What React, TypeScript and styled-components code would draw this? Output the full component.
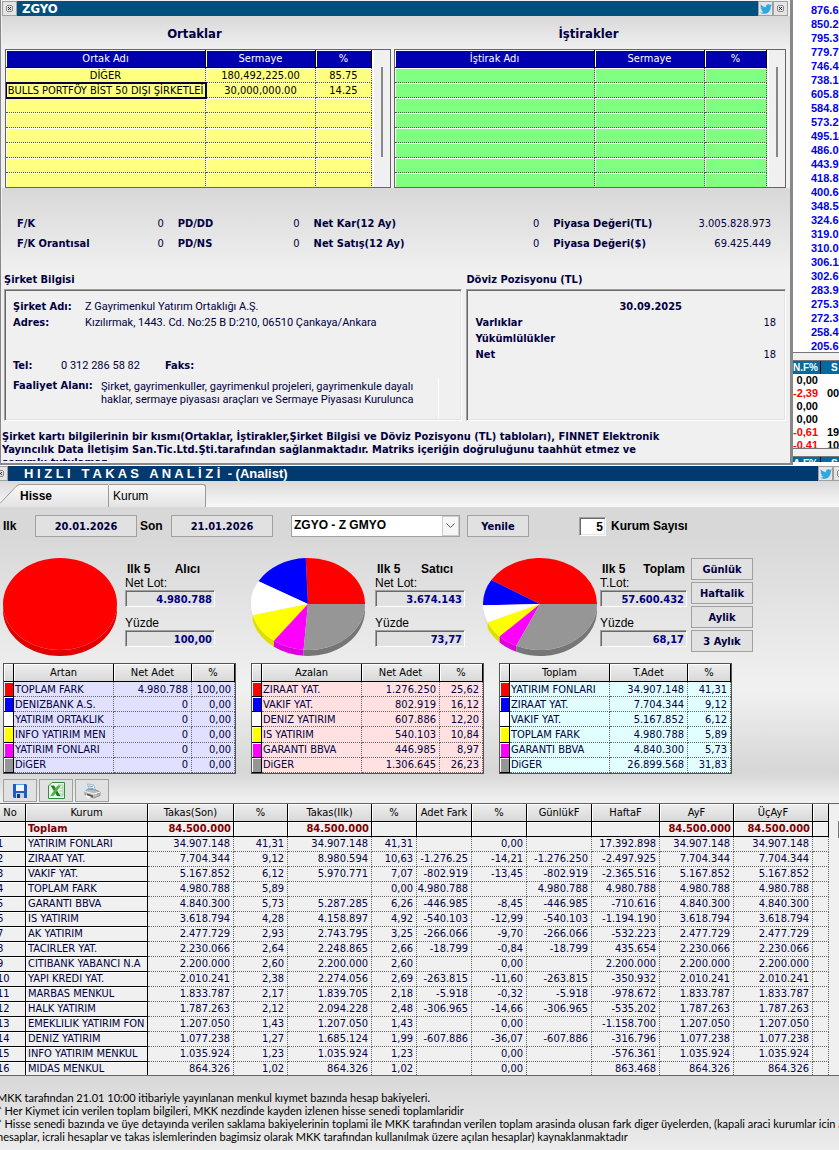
import React from "react";
import styled, { createGlobalStyle } from "styled-components";
import { FaTwitter } from "react-icons/fa";

const ui = `"DejaVu Sans Condensed", "DejaVu Sans", sans-serif`;
const sys = `"Liberation Sans", Arial, sans-serif`;
const prose = `Roboto, "Liberation Sans", sans-serif`;
const note = `Lato, "Liberation Sans", sans-serif`;
const navy = "#000040";

const GlobalStyle = createGlobalStyle`
  *, *::before, *::after { box-sizing: border-box; }
  body { margin: 0; background: #ececec; font: 11px/15px ${ui}; color: ${navy}; overflow-x: hidden; }
  button, input, select { font: inherit; color: inherit; margin: 0; border-radius: 0; }
  h1, h2, p, dl, dd, dt { margin: 0; font-size: inherit; }
  table { border-spacing: 0; table-layout: fixed; width: 100%; }
`;

const Page = styled.div`
  overflow: hidden;
`;

const TopArea = styled.div`
  display: flex;
`;

const CompanyWindow = styled.section`
  flex: 1;
  min-width: 0;
  height: 465px;
  display: flex;
  flex-direction: column;
  padding: 1px 0 1px 1px;
  background: #f0f0f0;
  border: solid #888;
  border-width: 0 3px 2px 1px;
  overflow: hidden;
`;

const TitleBar = styled.header<{ $bg: string; $left: number; $right: number }>`
  display: flex;
  align-items: center;
  height: 15px;
  flex: none;
  background: ${(p) => p.$bg};
  color: #fff;
  margin-left: ${(p) => p.$left}px;
  margin-right: ${(p) => p.$right}px;
`;

const WindowName = styled.h1<{ $wide?: boolean }>`
  flex: 1;
  font: bold 13px/15px ${(p) => (p.$wide ? sys : ui)};
  padding-left: ${(p) => (p.$wide ? 16 : 5)}px;
  white-space: pre;
`;

const TitleButton = styled.button`
  display: flex;
  align-items: center;
  justify-content: center;
  width: 15px;
  height: 15px;
  padding: 0;
  border: 1px solid #a0a0a0;
  background: #e4e4e4;
  color: #2fa8e0;
`;

const Headings = styled.div`
  display: grid;
  grid-template-columns: 382fr 400fr;
  height: 33px;
  flex: none;
  background: linear-gradient(#d8d8d8, #f0f0f0);
  h2 { font: bold 13px/35px ${ui}; text-align: center; }
`;

const Grids = styled.div`
  display: grid;
  grid-template-columns: 386fr 392fr;
  gap: 3px;
  padding: 0 4px 0 3px;
  flex: none;
`;

const GridFrame = styled.div`
  display: flex;
  height: 139px;
  border: 1px solid #666;
  overflow: hidden;
`;

const HolderTable = styled.table<{ $fill: string }>`
  flex: 1;
  width: auto;
  align-self: flex-start;
  color: #000;
  text-align: center;
  th {
    height: 18px;
    padding: 0;
    font-weight: normal;
    line-height: 15px;
    color: #fff;
    background: #0000b0;
    border-right: 1px solid #000;
    border-bottom: 1px solid #000;
    box-shadow: inset 1px 1px #fff;
  }
  td {
    height: 15px;
    padding: 2px 0 0;
    line-height: 12px;
    white-space: nowrap;
    background: ${(p) => p.$fill};
    border-right: 1px dotted #555;
    border-bottom: 1px dotted #555;
    box-shadow: inset 1px 1px #fff;
  }
`;

const SelectedCell = styled.td`
  && {
    outline: 2px solid #00003c;
    outline-offset: -1px;
  }
`;

const ScrollTrack = styled.div`
  width: 18px;
  padding: 17px 7px 0 0;
  background: #f0f0f0;
  border-left: 2px solid #fff;
  display: flex;
  justify-content: flex-end;
`;

const ScrollThumb = styled.div`
  width: 2px;
  height: 90px;
  background: #888;
`;

const Ratios = styled.div`
  display: grid;
  grid-template-columns: 147fr 122fr 226fr 218fr;
  gap: 0 14px;
  padding: 26px 19px 17px 15px;
  flex: none;
  background: linear-gradient(#d8d8d8, #f0f0f0);
`;

const Ratio = styled.dl`
  display: flex;
  justify-content: space-between;
  line-height: 20px;
  white-space: nowrap;
  dt { font-weight: bold; }
`;

const Details = styled.div`
  display: grid;
  grid-template-columns: 459fr 320fr;
  gap: 0 4px;
  padding: 0 4px 0 2px;
  flex: none;
  h2 { font: bold 11px/18px ${ui}; height: 18px; }
`;

const Sunken = styled.div`
  height: 132px;
  padding: 9px 9px 9px 8px;
  border: 1px solid;
  border-color: #a0a0a0 #fff #fff #a0a0a0;
  box-shadow: inset 1px 1px #696969, inset -1px -1px #e3e3e3;
`;

const Line = styled.div<{ $h?: number }>`
  display: flex;
  min-height: ${(p) => p.$h ?? 16}px;
  font-family: ${prose};
  line-height: 16px;
  white-space: nowrap;
`;

const Term = styled.b<{ $w: number }>`
  width: ${(p) => p.$w}px;
  flex: none;
  font-family: ${ui};
`;

const Phone = styled.span`
  width: 104px;
  flex: none;
`;

const Activity = styled.p`
  flex: 1;
  max-width: 338px;
  line-height: 13px;
  padding-top: 2px;
  height: 40px;
  border-right: 1px solid #fff;
  white-space: pre-line;
`;

const PositionDate = styled.p`
  font-weight: bold;
  line-height: 16px;
  padding-left: 50px;
  text-align: center;
`;

const Position = styled.div`
  display: flex;
  justify-content: space-between;
  line-height: 16px;
`;

const Disclaimer = styled.p`
  font-weight: bold;
  line-height: 13px;
  margin-top: 9px;
  height: 31px;
  overflow: hidden;
  white-space: pre;
`;

const Quotes = styled.aside`
  width: 46px;
  height: 465px;
  overflow: hidden;
  background: #fff;
  font: bold 11px/14px ${sys};
  color: #0000f0;
`;

const QuoteList = styled.div`
  height: 352px;
  padding: 3px 0 0 18px;
`;

const Divider = styled.div`
  height: 9px;
  border: solid #777;
  border-width: 1px 0;
  background: #f0f0f0;
`;

const FlowTable = styled.table`
  color: #000;
  line-height: 13px;
  th {
    height: 13px;
    padding: 0 2px 0 0;
    color: #fff;
    background: #006b9f;
    border-right: 1px solid #000;
    font-size: 10px;
    line-height: 12px;
    text-align: right;
  }
  td { height: 13px; padding: 0 3px 0 0; text-align: right; }
  td:last-child, th:last-child { padding: 0 0 0 6px; text-align: left; white-space: nowrap; border-right: 0; }
  th:last-child { padding-left: 10px; }
`;

const FlowClip = styled.div<{ $h: number }>`
  height: ${(p) => p.$h}px;
  overflow: hidden;
`;

const Change = styled.td<{ $down: boolean }>`
  color: ${(p) => (p.$down ? "#f00" : "#000")};
`;

const AnalysisWindow = styled.section`
  border-top: 1px solid #fff;
`;

const Tabs = styled.div`
  display: flex;
  align-items: flex-end;
  height: 26px;
  background: linear-gradient(#dadada, #f8f8f8);
`;

const Tab = styled.button<{ $active?: boolean }>`
  display: flex;
  align-items: center;
  height: 23px;
  width: ${(p) => (p.$active ? 109 : 97)}px;
  padding: 0 0 0 ${(p) => (p.$active ? 0 : 4)}px;
  border: solid #999;
  border-width: ${(p) => (p.$active ? "0 1px 0 0" : "1px 1px 0 0")};
  border-radius: 0 3px 0 0;
  background: ${(p) => (p.$active ? "none" : "linear-gradient(#f8f8f8, #e4e4e4)")};
  color: #000;
  font: ${(p) => (p.$active ? "bold" : "normal")} 12px/22px ${sys};
  svg { display: block; flex: none; }
  span { flex: 1; height: 23px; border-top: 1px solid #999; background: linear-gradient(#f8f8f8, #e4e4e4); text-align: left; line-height: 23px; }
`;

const Body = styled.div`
  background: linear-gradient(#d8d8d8 0, #d8d8d8 30px, #f0f0f0 175px, #f0f0f0 185px, #d6d6d6 265px, #f0f0f0 294px, #f0f0f0 100%);
`;

const Controls = styled.form`
  display: flex;
  align-items: center;
  height: 38px;
  padding-left: 3px;
  font: bold 12px/15px ${sys};
  color: #000;
`;

const Button = styled.button`
  height: 22px;
  width: 62px;
  padding: 0;
  border: 1px solid #a0a0a0;
  background: #e1e1e1;
  color: ${navy};
  font: bold 11px/15px ${ui};
`;

const DateButton = styled(Button)`
  width: 102px;
`;

const ControlLabel = styled.label<{ $w?: number; $left?: number }>`
  width: ${(p) => (p.$w ? p.$w + "px" : "auto")};
  padding-left: ${(p) => p.$left ?? 0}px;
`;

const Combo = styled.div`
  position: relative;
  width: 169px;
  margin: 0 7px 0 18px;
  select {
    appearance: none;
    display: block;
    width: 100%;
    height: 22px;
    padding: 0 0 2px 2px;
    border: 1px solid #a0a0a0;
    background: #fff;
    color: #000;
    font-weight: bold;
  }
`;

const ComboArrow = styled.span`
  position: absolute;
  top: 1px;
  right: 1px;
  width: 17px;
  height: 20px;
  display: flex;
  align-items: center;
  justify-content: center;
  border: 1px solid #ccc;
  background: #f6f6f6;
  pointer-events: none;
`;

const CountInput = styled.input`
  width: 27px;
  height: 19px;
  margin-left: 50px;
  padding: 1px 2px 0 0;
  border: 1px solid;
  border-color: #a0a0a0 #fff #fff #a0a0a0;
  box-shadow: inset 1px 1px #696969, inset -1px -1px #e3e3e3;
  background: #fff;
  color: #000;
  text-align: right;
`;

const Charts = styled.div`
  display: flex;
  padding: 13px 0 0 3px;
  height: 118px;
`;

const ChartGroup = styled.div<{ $w: number; $gap: number }>`
  display: flex;
  justify-content: space-between;
  width: ${(p) => p.$w}px;
  margin-right: ${(p) => p.$gap}px;
  > svg { display: block; flex: none; }
`;

const Summary = styled.div<{ $w: number }>`
  width: ${(p) => p.$w}px;
  padding-top: 4px;
  color: #000;
  font: 12px/14px ${sys};
`;

const SummaryHead = styled.div<{ $end: number }>`
  display: flex;
  justify-content: space-between;
  font-weight: bold;
  padding: 0 ${(p) => p.$end}px 0 2px;
`;

const Field = styled.label`
  display: block;
  height: 40px;
  input {
    display: block;
    width: 100%;
    height: 17px;
    padding: 1px 2px 0 0;
    border: 1px solid;
    border-color: #a0a0a0 #fff #fff #a0a0a0;
    box-shadow: inset 1px 1px #696969, inset -1px -1px #e3e3e3;
    background: #e1e1e1;
    color: #000080;
    font: bold 11px/13px ${ui};
    text-align: right;
  }
`;

const Periods = styled.div`
  display: flex;
  flex-direction: column;
  gap: 2px;
`;

const MiniGrids = styled.div`
  display: flex;
  gap: 15px;
  padding-left: 3px;
`;

const MiniTable = styled.table<{ $fill: string }>`
  width: 233px;
  height: 111px;
  border: 1px solid #555;
  background: #fff;
  color: ${navy};
  th {
    height: 18px;
    padding: 0;
    font-weight: normal;
    line-height: 15px;
    color: #000;
    background: linear-gradient(#eee, #d8d8d8);
    border-right: 1px solid #000;
    border-bottom: 1px solid #000;
    box-shadow: inset 1px 1px #fff;
  }
  td {
    height: 15px;
    padding: 0 3px 0 1px;
    line-height: 13px;
    white-space: nowrap;
    overflow: hidden;
    text-align: right;
    background: ${(p) => p.$fill};
    border-right: 1px dotted #666;
    border-bottom: 1px dotted #666;
  }
  td:nth-child(2) { text-align: left; padding-right: 0; }
`;

const Swatch = styled.td<{ $c: string }>`
  && {
    background: ${(p) => p.$c};
    border-right: 1px solid #000;
    border-bottom: 1px solid #000;
    box-shadow: inset 1px 1px #fff;
  }
`;

const Actions = styled.div`
  display: flex;
  gap: 2px;
  padding: 5px 0 1px 3px;
`;

const IconButton = styled.button`
  display: flex;
  align-items: center;
  justify-content: center;
  width: 34px;
  height: 23px;
  padding: 0;
  border: 1px solid #a0a0a0;
  background: #e1e1e1;
`;

const ResultFrame = styled.div`
  display: flex;
  height: 273px;
  margin-left: -5px;
  border: solid #666;
  border-width: 1px 0;
  background: #f0f0f0;
  overflow: hidden;
`;

const ResultTable = styled.table`
  flex: 1;
  width: auto;
  align-self: flex-start;
  th {
    height: 18px;
    padding: 0;
    font-weight: normal;
    line-height: 15px;
    color: #000;
    background: linear-gradient(#eee, #d8d8d8);
    border-right: 1px solid #000;
    border-bottom: 1px solid #000;
    box-shadow: inset 1px 1px #fff;
    white-space: nowrap;
  }
  td {
    height: 15px;
    padding: 0 3px 0 0;
    line-height: 14px;
    text-align: right;
    white-space: nowrap;
    overflow: hidden;
    border-right: 1px dotted #666;
    border-bottom: 1px dotted #666;
  }
  td:nth-child(1), td:nth-child(2) {
    text-align: left;
    padding: 0 0 0 2px;
    border-right: 1px solid #000;
    border-bottom: 1px solid #000;
    box-shadow: inset 1px 1px #fff;
  }
`;

const TotalRow = styled.tr`
  color: #800000;
  font-weight: bold;
  && td { border-right: 1px solid #000; border-bottom: 1px solid #000; box-shadow: inset 1px 1px #fff; padding-right: 2px; }
`;

const ResultScroll = styled.div`
  width: 10px;
  display: flex;
  justify-content: flex-end;
  padding-top: 17px;
`;

const ResultThumb = styled.div`
  width: 1px;
  height: 17px;
  background: #777;
`;

const Notes = styled.footer`
  padding: 15px 0 7px;
  margin-left: -3px;
  background: linear-gradient(#d8d8d8, #ececec);
  color: #000;
  font: 11px/13px ${note};
  white-space: nowrap;
`;

const CloseGlyph = () => (
  <svg width="7" height="7" viewBox="0 0 7 7" aria-hidden="true" shapeRendering="crispEdges">
    <path d="M1 0.5h5M1 6.5h5M0.5 1v5M6.5 1v5" stroke="#888" fill="none" />
    <path d="M2 2l3 3M5 2l-3 3" stroke="#222" strokeWidth="1.3" fill="none" />
  </svg>
);

const colors = ["#ff0000", "#0000ff", "#ffffff", "#ffff00", "#ff00ff", "#969696"];
const sides = ["#df0000", "#0000d8", "#e0e0e0", "#dede00", "#de00de", "#767676"];

function Pie({ shares, label }: { shares: number[]; label: string }) {
  const cx = 57, cy = 46, rx = 57, ry = 46, depth = 6;
  const total = shares.reduce((a, b) => a + b, 0);
  const pt = (a: number, dy = 0) => `${(cx + rx * Math.cos(a)).toFixed(2)} ${(cy - ry * Math.sin(a) + dy).toFixed(2)}`;
  let start = 0;
  const parts = shares.map((s, i) => {
    const a0 = start;
    const a1 = (start += (s / total) * Math.PI * 2);
    const w0 = Math.max(a0, Math.PI);
    return { i, a0, a1, w0, full: s === total };
  }).filter((p) => p.a1 > p.a0);
  return (
    <svg width="114" height="98" viewBox="0 0 114 98" role="img" aria-label={label}>
      {parts.filter((p) => p.a1 > Math.PI).map((p) => (
        <path key={p.i} fill={sides[p.i]} d={`M${pt(p.w0)}A${rx} ${ry} 0 0 0 ${pt(p.a1)}L${pt(p.a1, depth)}A${rx} ${ry} 0 0 1 ${pt(p.w0, depth)}Z`} />
      ))}
      {parts.map((p) =>
        p.full ? (
          <ellipse key={p.i} cx={cx} cy={cy} rx={rx} ry={ry} fill={colors[p.i]} />
        ) : (
          <path key={p.i} fill={colors[p.i]} d={`M${cx} ${cy}L${pt(p.a0)}A${rx} ${ry} 0 ${p.a1 - p.a0 > Math.PI ? 1 : 0} 0 ${pt(p.a1)}Z`} />
        )
      )}
    </svg>
  );
}

const SaveIcon = () => (
  <svg width="16" height="16" viewBox="0 0 16 16" aria-hidden="true">
    <path d="M1 1h13l1 1v13H2l-1-1z" fill="#1d5fc0" />
    <path d="M4 1h8v7H4z" fill="#f2f6fc" />
    <path d="M4 1h8v1H4z" fill="#4fa3ea" />
    <path d="M4 10h8v5H4z" fill="#c6d3e4" />
    <path d="M5 11h3v4H5z" fill="#173a78" />
  </svg>
);

const ExcelIcon = () => (
  <svg width="17" height="17" viewBox="0 0 17 17" aria-hidden="true">
    <path d="M4 .5h12.500v16H.5V4z" fill="#eef8ec" stroke="#2f8f3a" />
    <path d="M10 3h5v11h-5M11 6h4M11 9h4M11 12h4" stroke="#9ccf9c" fill="none" />
    <path d="M2.500 3.500h3.500l6.500 10.500H9z" fill="#1f7d2c" />
    <path d="M9.500 3.500h3.300L5.500 14H2.200z" fill="#55b143" />
  </svg>
);

const PrintIcon = () => (
  <svg width="17" height="16" viewBox="0 0 17 16" aria-hidden="true">
    <path d="M3.500 1l6 .8 2 5.700-6-1z" fill="#fbfdff" stroke="#9aa7b5" strokeWidth=".8" />
    <path d="M5 3l4 .7M5.500 5l4 .7" stroke="#5aa4dd" />
    <path d="M1 8.500l3-2.500 8 1 4 2v3.500l-6 2.500-9-3z" fill="#bdbdbd" stroke="#777" strokeWidth=".7" />
    <path d="M1 8.500l9 2.500 6-2" stroke="#f5f5f5" fill="none" />
    <path d="M3 10.500l6 2v2l-6-2z" fill="#555" />
    <path d="M2 12l5 1.700-2 1.300-4-1.500z" fill="#fff" />
    <path d="M13 11h1.500" stroke="#4caf50" />
  </svg>
);

const quotes = ["876.62", "850.20", "795.30", "779.73", "746.44", "738.17", "605.87", "584.87", "573.29", "495.14", "486.00", "443.97", "418.87", "400.64", "348.54", "324.60", "319.01", "310.00", "306.11", "302.63", "283.99", "275.30", "272.33", "258.40", "205.63"];
const flows = [["0,00", ""], ["-2,39", "00"], ["0,00", ""], ["0,00", ""], ["-0,61", "19"], ["-0,41", "10"]];

const ratioGroups = [
  [["F/K", "0"], ["F/K Orantısal", "0"]],
  [["PD/DD", "0"], ["PD/NS", "0"]],
  [["Net Kar(12 Ay)", "0"], ["Net Satış(12 Ay)", "0"]],
  [["Piyasa Değeri(TL)", "3.005.828.973"], ["Piyasa Değeri($)", "69.425.449"]],
];

const summaries = [
  { side: "Alıcı", lotLabel: "Net Lot:", lot: "4.980.788", pct: "100,00", w: 212, gap: 36, bw: 90, end: 15, shares: [100, 0, 0, 0, 0, 0] },
  { side: "Satıcı", lotLabel: "Net Lot:", lot: "3.674.143", pct: "73,77", w: 214, gap: 18, bw: 90, end: 12, shares: [25.62, 16.12, 12.2, 10.84, 8.97, 26.23] },
  { side: "Toplam", lotLabel: "T.Lot:", lot: "57.600.432", pct: "68,17", w: 204, gap: 4, bw: 87, end: 2, shares: [41.31, 9.12, 6.12, 5.89, 5.73, 31.83] },
];

const minis = [
  { head: ["Artan", "Net Adet"], fill: "#e1e1ff", rows: [["TOPLAM FARK", "4.980.788", "100,00"], ["DENIZBANK A.S.", "0", "0,00"], ["YATIRIM ORTAKLIK", "0", "0,00"], ["INFO YATIRIM MEN", "0", "0,00"], ["YATIRIM FONLARI", "0", "0,00"], ["DiGER", "0", "0,00"]] },
  { head: ["Azalan", "Net Adet"], fill: "#ffe1e1", rows: [["ZIRAAT YAT.", "1.276.250", "25,62"], ["VAKIF YAT.", "802.919", "16,12"], ["DENIZ YATIRIM", "607.886", "12,20"], ["IS YATIRIM", "540.103", "10,84"], ["GARANTI BBVA", "446.985", "8,97"], ["DiGER", "1.306.645", "26,23"]] },
  { head: ["Toplam", "T.Adet"], fill: "#e1ffff", rows: [["YATIRIM FONLARI", "34.907.148", "41,31"], ["ZIRAAT YAT.", "7.704.344", "9,12"], ["VAKIF YAT.", "5.167.852", "6,12"], ["TOPLAM FARK", "4.980.788", "5,89"], ["GARANTI BBVA", "4.840.300", "5,73"], ["DiGER", "26.899.568", "31,83"]] },
];

const resultCols = [31, 122, 86, 54, 84, 45, 55, 55, 65, 68, 74, 79, 16];
const resultHead = ["No", "Kurum", "Takas(Son)", "%", "Takas(Ilk)", "%", "Adet Fark", "%", "GünlükF", "HaftaF", "AyF", "ÜçAyF", ""];
const results = [
  ["YATIRIM FONLARI", "34.907.148", "41,31", "34.907.148", "41,31", "", "0,00", "", "17.392.898"],
  ["ZIRAAT YAT.", "7.704.344", "9,12", "8.980.594", "10,63", "-1.276.25", "-14,21", "-1.276.250", "-2.497.925"],
  ["VAKIF YAT.", "5.167.852", "6,12", "5.970.771", "7,07", "-802.919", "-13,45", "-802.919", "-2.365.516"],
  ["TOPLAM FARK", "4.980.788", "5,89", "", "0,00", "4.980.788", "", "4.980.788", "4.980.788"],
  ["GARANTI BBVA", "4.840.300", "5,73", "5.287.285", "6,26", "-446.985", "-8,45", "-446.985", "-710.616"],
  ["IS YATIRIM", "3.618.794", "4,28", "4.158.897", "4,92", "-540.103", "-12,99", "-540.103", "-1.194.190"],
  ["AK YATIRIM", "2.477.729", "2,93", "2.743.795", "3,25", "-266.066", "-9,70", "-266.066", "-532.223"],
  ["TACIRLER YAT.", "2.230.066", "2,64", "2.248.865", "2,66", "-18.799", "-0,84", "-18.799", "435.654"],
  ["CITIBANK YABANCI N.A", "2.200.000", "2,60", "2.200.000", "2,60", "", "0,00", "", "2.200.000"],
  ["YAPI KREDI YAT.", "2.010.241", "2,38", "2.274.056", "2,69", "-263.815", "-11,60", "-263.815", "-350.932"],
  ["MARBAS MENKUL", "1.833.787", "2,17", "1.839.705", "2,18", "-5.918", "-0,32", "-5.918", "-978.672"],
  ["HALK YATIRIM", "1.787.263", "2,12", "2.094.228", "2,48", "-306.965", "-14,66", "-306.965", "-535.202"],
  ["EMEKLILIK YATIRIM FON", "1.207.050", "1,43", "1.207.050", "1,43", "", "0,00", "", "-1.158.700"],
  ["DENIZ YATIRIM", "1.077.238", "1,27", "1.685.124", "1,99", "-607.886", "-36,07", "-607.886", "-316.796"],
  ["INFO YATIRIM MENKUL", "1.035.924", "1,23", "1.035.924", "1,23", "", "0,00", "", "-576.361"],
  ["MIDAS MENKUL", "864.326", "1,02", "864.326", "1,02", "", "0,00", "", "863.468"],
];

function Holders({ name, fill, last, rows }: { name: string; fill: string; last: number; rows: string[][] }) {
  const filler = Array.from({ length: 8 - rows.length }, () => ["", "", ""]);
  return (
    <GridFrame>
      <HolderTable $fill={fill}>
        <colgroup><col /><col width={110} /><col width={last} /></colgroup>
        <thead><tr><th>{name}</th><th>Sermaye</th><th>%</th></tr></thead>
        <tbody>
          {[...rows, ...filler].map((r, i) => (
            <tr key={i}>
              {i === 1 && r[0] ? <SelectedCell>{r[0]}</SelectedCell> : <td>{r[0]}</td>}
              <td>{r[1]}</td>
              <td>{r[2]}</td>
            </tr>
          ))}
        </tbody>
      </HolderTable>
      <ScrollTrack><ScrollThumb /></ScrollTrack>
    </GridFrame>
  );
}

export default function App() {
  return (
    <Page>
      <GlobalStyle />
      <TopArea>
        <CompanyWindow>
          <TitleBar $bg="#00507f" $left={0} $right={2}>
            <TitleButton aria-label="Kapat"><CloseGlyph /></TitleButton>
            <WindowName>ZGYO</WindowName>
            <TitleButton aria-label="Twitter"><FaTwitter size={12} /></TitleButton>
            <TitleButton aria-label="Pencereyi kapat"><CloseGlyph /></TitleButton>
          </TitleBar>
          <Headings><h2>Ortaklar</h2><h2>İştirakler</h2></Headings>
          <Grids>
            <Holders name="Ortak Adı" fill="#ffff80" last={56} rows={[["DİĞER", "180,492,225.00", "85.75"], ["BULLS PORTFÖY BİST 50 DIŞI ŞİRKETLEİ", "30,000,000.00", "14.25"]]} />
            <Holders name="İştirak Adı" fill="#80ff80" last={62} rows={[]} />
          </Grids>
          <Ratios>
            {ratioGroups.map((g, i) => (
              <div key={i}>
                {g.map(([k, v]) => <Ratio key={k}><dt>{k}</dt><dd>{v}</dd></Ratio>)}
              </div>
            ))}
          </Ratios>
          <Details>
            <h2>Şirket Bilgisi</h2>
            <h2>Döviz Pozisyonu (TL)</h2>
            <Sunken>
              <Line><Term $w={72}>Şirket Adı:</Term>Z Gayrimenkul Yatırım Ortaklığı A.Ş.</Line>
              <Line $h={43}><Term $w={72}>Adres:</Term>Kızılırmak, 1443. Cd. No:25 B D:210, 06510 Çankaya/Ankara</Line>
              <Line $h={20}><Term $w={48}>Tel:</Term><Phone>0 312 286 58 82</Phone><Term $w={40}>Faks:</Term></Line>
              <Line><Term $w={88}>Faaliyet Alanı:</Term><Activity>{"Şirket, gayrimenkuller, gayrimenkul projeleri, gayrimenkule dayalı\nhaklar, sermaye piyasası araçları ve Sermaye Piyasası Kurulunca"}</Activity></Line>
            </Sunken>
            <Sunken>
              <PositionDate>30.09.2025</PositionDate>
              <Position><b>Varlıklar</b><span>18</span></Position>
              <Position><b>Yükümlülükler</b></Position>
              <Position><b>Net</b><span>18</span></Position>
            </Sunken>
          </Details>
          <Disclaimer>{"Şirket kartı bilgilerinin bir kısmı(Ortaklar, İştirakler,Şirket Bilgisi ve Döviz Pozisyonu (TL) tabloları), FINNET Elektronik\nYayıncılık Data İletişim San.Tic.Ltd.Şti.tarafından sağlanmaktadır. Matriks içeriğin doğruluğunu taahhüt etmez ve\nsorumlu tutulamaz."}</Disclaimer>
        </CompanyWindow>
        <Quotes>
          <QuoteList>{quotes.map((q) => <div key={q}>{q}</div>)}</QuoteList>
          <Divider />
          <FlowClip $h={87}>
            <FlowTable>
              <colgroup><col width={28} /><col /></colgroup>
              <thead><tr><th>N.F%</th><th>S</th></tr></thead>
              <tbody>
                {flows.map(([a, b], i) => <tr key={i}><Change $down={a[0] === "-"}>{a}</Change><Change $down={false}>{b}</Change></tr>)}
              </tbody>
            </FlowTable>
          </FlowClip>
          <Divider />
          <FlowClip $h={5}>
            <FlowTable>
              <colgroup><col width={28} /><col /></colgroup>
              <thead><tr><th>A.F%</th><th>S</th></tr></thead>
            </FlowTable>
          </FlowClip>
        </Quotes>
      </TopArea>

      <AnalysisWindow>
        <TitleBar $bg="#003a6e" $left={-7} $right={-9}>
          <TitleButton aria-label="Kapat"><CloseGlyph /></TitleButton>
          <WindowName $wide>{"H I Z L I   T A K A S   A N A L İ Z İ  - (Analist)"}</WindowName>
          <TitleButton aria-label="Twitter"><FaTwitter size={12} /></TitleButton>
          <TitleButton aria-label="Pencereyi kapat"><CloseGlyph /></TitleButton>
        </TitleBar>
        <Tabs>
          <Tab $active>
            <svg width="20" height="23" viewBox="0 0 20 23" aria-hidden="true">
              <defs>
                <linearGradient id="tab" x1="0" y1="0" x2="0" y2="1">
                  <stop offset="0" stopColor="#f8f8f8" />
                  <stop offset="1" stopColor="#e4e4e4" />
                </linearGradient>
              </defs>
              <path d="M0 19.500L16 2.500Q18 .5 20 .5V23H0z" fill="url(#tab)" />
              <path d="M0 19.500L16 2.500Q18 .5 20 .5" fill="none" stroke="#999" />
            </svg>
            <span>Hisse</span>
          </Tab>
          <Tab>Kurum</Tab>
        </Tabs>
        <Body>
          <Controls onSubmit={(e) => e.preventDefault()}>
            <ControlLabel $w={32} htmlFor="first">Ilk</ControlLabel>
            <DateButton id="first" type="button">20.01.2026</DateButton>
            <ControlLabel $w={34} $left={3} htmlFor="last">Son</ControlLabel>
            <DateButton id="last" type="button">21.01.2026</DateButton>
            <Combo>
              <select aria-label="Hisse"><option>ZGYO - Z GMYO</option></select>
              <ComboArrow>
                <svg width="9" height="6" viewBox="0 0 9 6" aria-hidden="true"><path d="M.5 .5l4 4 4-4" fill="none" stroke="#555" /></svg>
              </ComboArrow>
            </Combo>
            <Button type="submit">Yenile</Button>
            <CountInput id="count" defaultValue="5" />
            <ControlLabel $left={5} htmlFor="count">Kurum Sayısı</ControlLabel>
          </Controls>
          <Charts>
            {summaries.map((s) => (
              <ChartGroup key={s.side} $w={s.w} $gap={s.gap}>
                <Pie shares={s.shares} label={s.side} />
                <Summary $w={s.bw}>
                  <SummaryHead $end={s.end}><span>Ilk 5</span><span>{s.side}</span></SummaryHead>
                  <Field>{s.lotLabel}<input readOnly value={s.lot} /></Field>
                  <Field>Yüzde<input readOnly value={s.pct} /></Field>
                </Summary>
              </ChartGroup>
            ))}
            <Periods>
              {["Günlük", "Haftalik", "Aylik", "3 Aylık"].map((t) => <Button key={t} type="button">{t}</Button>)}
            </Periods>
          </Charts>
          <MiniGrids>
            {minis.map((m) => (
              <MiniTable key={m.head[0]} $fill={m.fill}>
                <colgroup><col width={10} /><col width={100} /><col width={78} /><col /></colgroup>
                <thead><tr><th /><th>{m.head[0]}</th><th>{m.head[1]}</th><th>%</th></tr></thead>
                <tbody>
                  {m.rows.map((r, i) => <tr key={r[0]}><Swatch $c={colors[i]} />{r.map((c, j) => <td key={j}>{c}</td>)}</tr>)}
                </tbody>
              </MiniTable>
            ))}
          </MiniGrids>
          <Actions>
            <IconButton aria-label="Kaydet"><SaveIcon /></IconButton>
            <IconButton aria-label="Excel"><ExcelIcon /></IconButton>
            <IconButton aria-label="Yazdır"><PrintIcon /></IconButton>
          </Actions>
          <ResultFrame>
            <ResultTable>
              <colgroup>{resultCols.map((w, i) => <col key={i} width={w} />)}</colgroup>
              <thead><tr>{resultHead.map((h, i) => <th key={i}>{h}</th>)}</tr></thead>
              <tbody>
                <TotalRow>
                  {["", "Toplam", "84.500.000", "", "84.500.000", "", "", "", "", "", "84.500.000", "84.500.000", ""].map((c, i) => <td key={i}>{c}</td>)}
                </TotalRow>
                {results.map((r, i) => (
                  <tr key={r[0]}>
                    <td>{i + 1}</td>
                    {r.map((c, j) => <td key={j}>{c}</td>)}
                    <td>{r[1]}</td>
                    <td>{r[1]}</td>
                    <td />
                  </tr>
                ))}
              </tbody>
            </ResultTable>
            <ResultScroll><ResultThumb /></ResultScroll>
          </ResultFrame>
          <Notes>
            <p>MKK tarafından 21.01 10:00 itibariyle yayınlanan menkul kıymet bazında hesap bakiyeleri.</p>
            <p>* Her Kiymet icin verilen toplam bilgileri, MKK nezdinde kayden izlenen hisse senedi toplamlaridir</p>
            <p>* Hisse senedi bazında ve üye detayında verilen saklama bakiyelerinin toplami ile MKK tarafından verilen toplam arasinda olusan fark diger üyelerden, (kapali araci kurumlar icin acilan</p>
            <p>hesaplar, icrali hesaplar ve takas islemlerinden bagimsiz olarak MKK tarafından kullanılmak üzere açılan hesaplar) kaynaklanmaktadır</p>
          </Notes>
        </Body>
      </AnalysisWindow>
    </Page>
  );
}
